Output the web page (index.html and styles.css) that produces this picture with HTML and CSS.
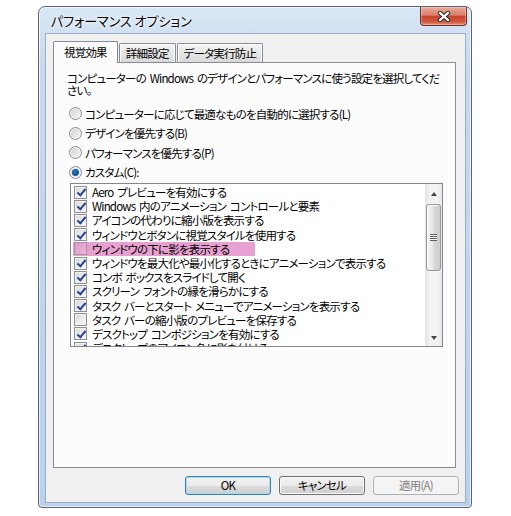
FILE: index.html
```html
<!DOCTYPE html>
<html lang="ja">
<head>
  <meta charset="UTF-8">
  <title>パフォーマンス オプション</title>
  <link rel="stylesheet" href="styles.css">
</head>
<body>

  <div class="window">
    <div class="titlebar">
      <span class="title">パフォーマンス オプション</span>
      <div class="close">
        <svg width="14" height="11" viewBox="0 0 14 11">
          <path d="M3 2 L11 9 M11 2 L3 9" stroke="#3a3a3a" stroke-width="4.4" stroke-linecap="round"/>
          <path d="M3 2 L11 9 M11 2 L3 9" stroke="#fff" stroke-width="2.2" stroke-linecap="round"/>
        </svg>
      </div>
    </div>

    <div class="client">
      <div class="tabs">
        <div class="tab active">視覚効果</div>
        <div class="tab">詳細設定</div>
        <div class="tab">データ実行防止</div>
      </div>

      <!-- 視覚効果 -->
      <div class="panel">
        <p class="intro">コンピューターの Windows のデザインとパフォーマンスに使う設定を選択してくだ<br>さい。</p>

        <div class="radios">
          <div class="radio"><span class="dot"></span>コンピューターに応じて最適なものを自動的に選択する(L)</div>
          <div class="radio"><span class="dot"></span>デザインを優先する(B)</div>
          <div class="radio"><span class="dot"></span>パフォーマンスを優先する(P)</div>
          <div class="radio on"><span class="dot"></span>カスタム(C):</div>
        </div>

        <div class="listbox">
          <div class="items">
            <div class="item"><span class="cb on"></span>Aero プレビューを有効にする</div>
            <div class="item"><span class="cb on"></span>Windows 内のアニメーション コントロールと要素</div>
            <div class="item"><span class="cb on"></span>アイコンの代わりに縮小版を表示する</div>
            <div class="item"><span class="cb on"></span>ウィンドウとボタンに視覚スタイルを使用する</div>
            <div class="item hl"><span class="cb"></span>ウィンドウの下に影を表示する</div>
            <div class="item"><span class="cb on"></span>ウィンドウを最大化や最小化するときにアニメーションで表示する</div>
            <div class="item"><span class="cb on"></span>コンボ ボックスをスライドして開く</div>
            <div class="item"><span class="cb on"></span>スクリーン フォントの縁を滑らかにする</div>
            <div class="item"><span class="cb on"></span>タスク バーとスタート メニューでアニメーションを表示する</div>
            <div class="item"><span class="cb"></span>タスク バーの縮小版のプレビューを保存する</div>
            <div class="item"><span class="cb on"></span>デスクトップ コンポジションを有効にする</div>
            <div class="item"><span class="cb on"></span>デスクトップのアイコン名に影を付ける</div>
          </div>
          <div class="scrollbar">
            <div class="sb-btn up"><span class="arrow"></span></div>
            <div class="sb-track"><div class="thumb"></div></div>
            <div class="sb-btn down"><span class="arrow"></span></div>
          </div>
        </div>
      </div>

      <div class="buttons">
        <div class="btn default">OK</div>
        <div class="btn">キャンセル</div>
        <div class="btn disabled">適用(A)</div>
      </div>
    </div>
  </div>

</body>
</html>
```

FILE: styles.css
```css
body {
  margin: 0;
  background: #fff;
  font-family: "Noto Sans CJK JP", sans-serif;
  font-size: 11.5px;
  letter-spacing: -0.8px;
  word-spacing: 2px;
  font-feature-settings: "palt";
  color: #000;
}

.window {
  box-sizing: border-box;
  width: 434px;
  height: 502px;
  margin: 6px 0 0 38px;
  padding: 0 5px 4px 6px;
  border: 1px solid #5b6470;
  border-radius: 7px 7px 4px 4px;
  background: linear-gradient(#dae7f5, #c6d9ee 60px, #bcd2eb);
  box-shadow: inset 0 0 0 1px rgba(255, 255, 255, 0.6);
  display: flex;
  flex-direction: column;
}

.titlebar {
  height: 26px;
  flex-shrink: 0;
  display: flex;
  justify-content: space-between;
  align-items: flex-start;
}
.title {
  font-size: 13px;
  letter-spacing: 0;
  word-spacing: 0;
  line-height: 14px;
  margin: 7px 0 0 6px;
  text-shadow: 0 0 5px #fff, 0 0 2px #fff;
}
.close {
  box-sizing: border-box;
  width: 47px;
  height: 19px;
  margin-right: -1px;
  border: 1px solid #6e2e25;
  border-top: none;
  border-radius: 0 0 4px 4px;
  background: linear-gradient(#e9aa9c, #db806c 45%, #c8462d 52%, #d0553b 80%, #e28d75);
  box-shadow: inset 0 0 0 1px rgba(255, 255, 255, 0.3);
  display: flex;
  align-items: center;
  justify-content: center;
}

.client {
  flex: 1;
  background: #f0f0f0;
  border: 1px solid #98aec6;
  padding: 7px 9px 0 7px;
  display: flex;
  flex-direction: column;
}

.tabs {
  display: flex;
  align-items: flex-end;
  height: 22px;
  margin-bottom: -1px;
  position: relative;
  z-index: 1;
}
.tab {
  box-sizing: border-box;
  height: 19px;
  margin-bottom: 1px;
  padding: 0 6px;
  line-height: 18px;
  border: 1px solid #898c95;
  border-bottom: none;
  border-radius: 2px 2px 0 0;
  background: linear-gradient(#f5f5f5, #e6e6e6 50%, #d9d9d9);
  box-shadow: inset 1px 1px 0 #fff, inset -1px 0 0 #fff;
}
.tab + .tab {
  margin-left: 1px;
}
.tab.active {
  height: 22px;
  margin-bottom: 0;
  padding: 0 10px;
  line-height: 20px;
  background: #fcfcfc;
  box-shadow: none;
}

.panel {
  box-sizing: border-box;
  height: 406px;
  background: #fcfcfc;
  border: 1px solid #898c95;
  padding: 9px 12px 0 13px;
}

.intro {
  margin: 0;
  line-height: 12px;
}

.radios {
  margin: 8px 0 0 2px;
}
.radio {
  height: 19.5px;
  display: flex;
  align-items: center;
}
.dot {
  box-sizing: border-box;
  width: 13px;
  height: 13px;
  margin-right: 3px;
  border: 1px solid #8b8b8b;
  border-radius: 50%;
  background: linear-gradient(135deg, #cfcfcf, #f8f8f8);
  box-shadow: inset 0 0 0 1px #f4f4f4;
  display: flex;
  align-items: center;
  justify-content: center;
}
.radio.on .dot::after {
  content: "";
  width: 7px;
  height: 7px;
  border-radius: 50%;
  background: radial-gradient(circle at 40% 40%, #2a7fc8, #0c4b93 60%, #6cbbe8);
}

.listbox {
  box-sizing: border-box;
  width: 373px;
  height: 164px;
  margin: 1px 0 0 3px;
  border: 1px solid #828790;
  background: #fff;
  display: flex;
}
.items {
  flex: 1;
  padding: 1px 0 0 2px;
  overflow: hidden;
}
.item {
  height: 14.2px;
  width: max-content;
  padding: 0 2px 0 1px;
  display: flex;
  align-items: center;
  white-space: nowrap;
  line-height: 14px;
}
.item.hl {
  box-sizing: border-box;
  width: 182px;
  background: #e8a0d0;
}
.cb {
  box-sizing: border-box;
  position: relative;
  flex-shrink: 0;
  width: 13px;
  height: 13px;
  margin-right: 5px;
  border: 1px solid #8e8f8f;
  background: linear-gradient(135deg, #d8d8d8, #fbfbfb);
  box-shadow: inset 0 0 0 1px #f2f2f2;
}
.item.hl .cb {
  border-color: #b28aa6;
  background: linear-gradient(135deg, #d99cc6, #eeb6dc);
  box-shadow: none;
}
.cb.on::after {
  content: "";
  position: absolute;
  left: 3.5px;
  top: 0.5px;
  width: 3px;
  height: 7px;
  border: solid #2b4594;
  border-width: 0 2px 2px 0;
  transform: rotate(40deg);
}

.scrollbar {
  width: 17px;
  display: flex;
  flex-direction: column;
  background: linear-gradient(to right, #e3e3e3, #f3f3f3 30%, #f3f3f3 70%, #e9e9e9);
}
.sb-btn {
  display: flex;
  align-items: center;
  justify-content: center;
}
.sb-btn.up {
  height: 20px;
}
.sb-btn.down {
  height: 17px;
}
.arrow {
  width: 0;
  height: 0;
  border-left: 3.5px solid transparent;
  border-right: 3.5px solid transparent;
}
.up .arrow {
  border-bottom: 4px solid #444;
}
.down .arrow {
  border-top: 4px solid #444;
}
.sb-track {
  flex: 1;
}
.thumb {
  box-sizing: border-box;
  height: 67px;
  margin: 0 1px;
  border: 1px solid #969696;
  border-radius: 3px;
  background: linear-gradient(to right, #f5f5f5, #e6e6e6 45%, #d8d8d8 55%, #cdcdcd);
  box-shadow: inset 1px 1px 0 #fff;
  display: flex;
  align-items: center;
  justify-content: center;
}
.thumb::after {
  content: "";
  width: 7px;
  height: 7px;
  background: repeating-linear-gradient(#5e5e5e 0 1px, #f4f4f4 1px 2px);
}

.buttons {
  display: flex;
  justify-content: flex-end;
  gap: 8px;
  margin: 8px -3px 0 0;
}
.btn {
  box-sizing: border-box;
  width: 86px;
  height: 19px;
  line-height: 17px;
  text-align: center;
  border: 1px solid #707070;
  border-radius: 3px;
  background: linear-gradient(#f2f2f2, #ebebeb 50%, #dddddd 50%, #cfcfcf);
  box-shadow: inset 0 0 0 1px #fbfbfb;
}
.btn.default {
  border-color: #3c7fb1;
  box-shadow: inset 0 0 0 1px #a6def6;
}
.btn.disabled {
  border-color: #adb2b5;
  background: #f4f4f4;
  color: #838383;
  box-shadow: none;
}
```
